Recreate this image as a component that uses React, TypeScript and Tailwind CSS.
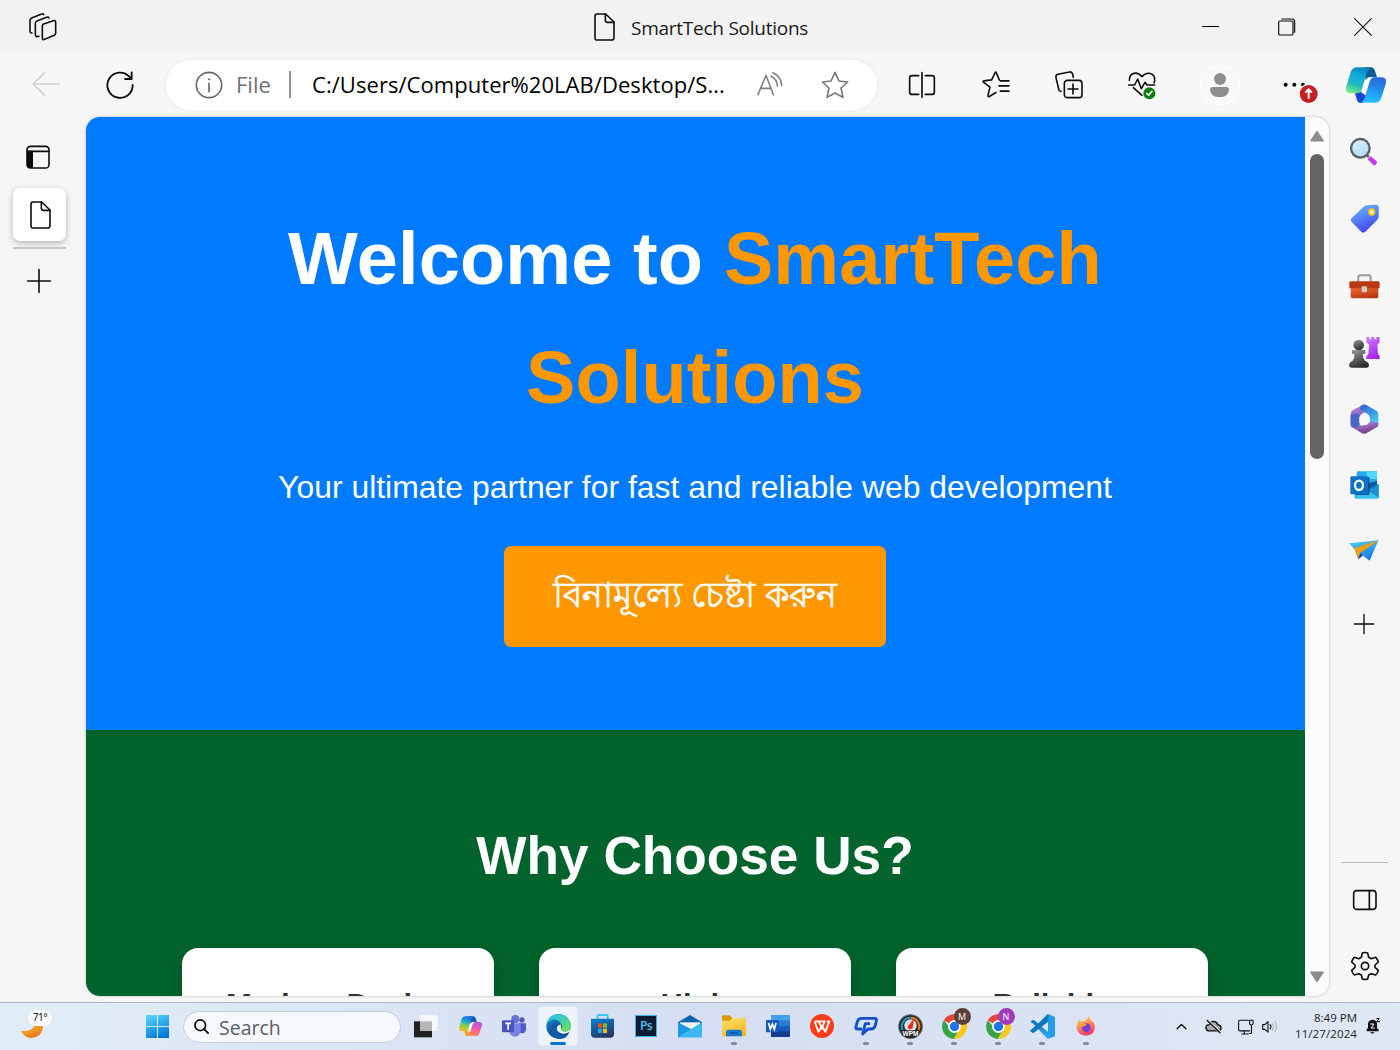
import React from "react";

type IcProps = { vb: string; w: number; h: number; children: React.ReactNode; c?: string };

function Ic({ vb, w, h, children, c = "#0d0d0d" }: IcProps) {
  return (
    <svg className="block shrink-0 overflow-visible" width={w} height={h} viewBox={vb} fill="none" stroke={c} strokeWidth={4.8} strokeLinecap="round" strokeLinejoin="round">
      {children}
    </svg>
  );
}

function Cell({ className, children }: { className: string; children?: React.ReactNode }) {
  return <div className={"flex shrink-0 items-center justify-center " + className}>{children}</div>;
}

const PageIcon = ({ w = 21, h = 28 }: { w?: number; h?: number }) => (
  <Ic vb="0 0 63 84" w={w} h={h}>
    <path d="M9 3H35L60 27V74Q60 81 53 81H9Q3 81 3 74V10Q3 3 9 3Z" />
    <path d="M34 3V22Q34 28 40 28H60" />
  </Ic>
);

function TitleBar() {
  return (
    <header className="flex h-[53px] shrink-0 items-center bg-[#f2f2f2]">
      <Cell className="w-[86px]">
        <Ic vb="0 0 84 84" w={28} h={28} c="#111">
          <path d="M42 34L73 23Q80 21 80 28V60Q80 65 76 67L47 79Q40 82 40 75V40Q40 36 42 34Z" />
          <path d="M30 70H28Q20 74 19 65V31Q19 26 24 24L53 13Q58 11 60 15" />
          <path d="M9 60Q3 60 3 54V22Q3 17 8 15L36 4Q42 1 44 5" />
        </Ic>
      </Cell>
      <div className="ml-[508px] flex w-[578px] shrink-0 items-center">
        <PageIcon w={21} h={28} />
        <span className="mt-[2px] ml-[16px] font-['Open_Sans'] text-[19px] leading-6 tracking-[-0.25px] whitespace-nowrap text-[#1a1a1a]">SmartTech Solutions</span>
      </div>
      <Cell className="w-[77px]"><div className="h-px w-[17px] bg-black" /></Cell>
      <Cell className="w-[76px]">
        <Ic vb="0 0 54 54" w={18} h={18}>
          <g strokeWidth="3.5"><rect x="2" y="9" width="43" height="42" rx="4" /><path d="M11 3H42Q50 3 50 12V43" /></g>
        </Ic>
      </Cell>
      <Cell className="w-[76px]">
        <Ic vb="0 0 54 54" w={18} h={18}><path strokeWidth="3.2" d="M2 2L52 52M52 2L2 52" /></Ic>
      </Cell>
    </header>
  );
}

function Copilot({ size, multi = false }: { size: number; multi?: boolean }) {
  const p = multi ? "m" : "b";
  const a = multi ? ["#1767df", "#1aa7d5", "#8bcf45", "#f5b928"] : ["#0886c4", "#12a9dc", "#1fb9be", "#73ea89"];
  const b = multi ? ["#b052e9", "#df5ac0", "#ff6981", "#ff9551"] : ["#2a68d6", "#2383ea", "#1fa4f6", "#2fc0fb"];
  return (
    <svg width={size} height={size * 0.9} viewBox="0 0 120 108" className="block">
      <defs>
        <linearGradient id={p + "1"} x1=".6" y1="0" x2=".3" y2="1">{a.map((c, i) => <stop key={i} offset={i / 3} stopColor={c} />)}</linearGradient>
        <linearGradient id={p + "2"} x1=".6" y1="0" x2=".4" y2="1">{b.map((c, i) => <stop key={i} offset={i / 3} stopColor={c} />)}</linearGradient>
      </defs>
      <path d="M58 1H74Q84 2 87 12L93 31H78Q70 31 66 40L58 40Z" fill={multi ? "#1758bd" : "#0e5a98"} />
      <path d="M26 76H38Q50 76 54 64L64 64L58 98Q54 108 44 108Q35 108 32 96Z" fill={multi ? "#f6a02d" : "#1646d2"} />
      <path d="M69 31H84Q75 32 71 43L58 86Q54 79 46 78L57 44Q60 33 69 31Z" fill="#fff" />
      <path d="M34 1H76Q66 6 61 22L48 66Q44 79 32 79H14Q-3 79 1 58L14 16Q19 1 34 1Z" fill={`url(#${p}1)`} />
      <path d="M87 107H44Q54 102 58 88L71 43Q75 31 88 31H106Q124 31 119 51L106 92Q101 107 87 107Z" fill={`url(#${p}2)`} />
    </svg>
  );
}

function Toolbar() {
  return (
    <div className="flex h-[64px] shrink-0 items-center bg-[#f7f7f7]">
      <Cell className="w-[92px] pb-[2px]">
        <Ic vb="0 0 84 72" w={28} h={24} c="#d0d0d0"><path strokeWidth="4.800" d="M82 36H4M38 2L3 36L38 70" /></Ic>
      </Cell>
      <Cell className="w-[55px] pb-px">
        <Ic vb="0 0 84 84" w={28} h={28}><path strokeWidth="5.500" d="M80 42A38 38 0 1 1 70 17L77 24M77 4V24H57" /></Ic>
      </Cell>
      <div className="ml-[19px] flex h-[50px] w-[711px] shrink-0 items-center rounded-full bg-white pb-[1px] shadow-[0_0_5px_rgba(0,0,0,0.07)]">
        <Cell className="ml-[29px] w-[28px]">
          <Ic vb="0 0 84 84" w={28} h={28} c="#666"><circle cx="42" cy="42" r="38" /><path d="M42 37V62" /><circle cx="42" cy="25" r="2" fill="#666" strokeWidth="3" /></Ic>
        </Cell>
        <span className="mb-[2px] ml-[13px] w-[40px] font-['Open_Sans'] text-[22px] leading-7 whitespace-nowrap text-[#707070]">File</span>
        <div className="ml-[13px] h-[27px] w-[2px] bg-[#949494]" />
        <span className="mb-px ml-[21px] w-[430px] font-['Open_Sans'] text-[22px] leading-7 tracking-[0.05px] whitespace-nowrap text-black">C:/Users/Computer%20LAB/Desktop/S...</span>
        <Cell className="mb-[2px] ml-[15px] w-[26px]">
          <Ic vb="0 0 78 72" w={26} h={24} c="#808080"><path d="M3 68L27 10L49 68M11 49H42M48 2Q72 12 74 40M42 13Q60 21 61 42" /></Ic>
        </Cell>
        <Cell className="ml-[38px] w-[28px]">
          <Ic vb="0 0 84 84" w={28} h={28} c="#777"><path d="M42 4L54 30L80 33L60 51L66 79L42 66L18 79L24 51L4 33L30 30Z" /></Ic>
        </Cell>
      </div>
      <Cell className="w-[90px] pb-[1px]">
        <Ic vb="0 0 80 80" w={26} h={26}><path strokeWidth="5" d="M40 2V78M30 11H9Q2 11 2 18V62Q2 69 9 69H30M50 11H71Q78 11 78 18V62Q78 69 71 69H50" /></Ic>
      </Cell>
      <Cell className="w-[58px] pb-[2px]">
        <Ic vb="0 0 84 80" w={28} h={27}><path d="M42 64L22 76Q17 78 18 72L24 48L4 33Q2 29 6 29L29 26L39 5Q41 1 43 5L52 26M55 29H81M51 44H81M55 60H81" /></Ic>
      </Cell>
      <Cell className="w-[88px] pb-[1px]">
        <Ic vb="0 0 84 84" w={28} h={28}><rect x="28" y="28" width="53" height="52" rx="9" /><path d="M54 39V69M39 54H69M18 61Q12 61 11 54L3 20Q1 12 9 10L43 3Q50 1 53 9L55 19" /></Ic>
      </Cell>
      <Cell className="w-[58px] pb-[1px]">
        <Ic vb="0 0 84 84" w={28} h={28}>
          <path d="M4 28C4 4 28 0 42 17C56 0 81 5 80 28Q80 33 78 35M2 42H20L29 24L40 53L51 34L57 42H80M16 50L42 73" />
          <circle cx="64" cy="67" r="18" fill="#107c10" stroke="none" /><path stroke="#fff" d="M56 67L62 73L72 61" />
        </Ic>
      </Cell>
      <Cell className="w-[97px]">
        <div className="flex h-[38px] w-[38px] flex-col items-center rounded-full bg-[#f8f8f8] pt-[7px] ring-1 ring-white">
          <div className="h-[12px] w-[12px] rounded-full bg-[#8e8e8e]" /><div className="mt-[2px] h-[10px] w-[19px] rounded-t-[3px] rounded-b-[9px] bg-[#8e8e8e]" />
        </div>
      </Cell>
      <Cell className="w-[64px] pb-px">
        <svg className="overflow-visible" width="36" height="28" viewBox="0 0 108 84">
          <g fill="#0d0d0d"><circle cx="11" cy="41" r="6" /><circle cx="37" cy="41" r="6" /><circle cx="63" cy="41" r="6" /></g>
          <circle cx="80" cy="69" r="31" fill="#f7f7f7" />
          <circle cx="80" cy="69" r="27" fill="#c42021" />
          <path d="M80 83V56M70 65L80 55L90 65" fill="none" stroke="#fff" strokeWidth="6" />
        </svg>
      </Cell>
      <Cell className="w-[68px]"><Copilot size={40} /></Cell>
    </div>
  );
}

function LeftBar() {
  return (
    <aside className="flex w-[86px] shrink-0 flex-col">
      <div className="mt-[28px] ml-[26px]">
        <Ic vb="0 0 72 72" w={24} h={24}><rect x="3" y="4" width="66" height="65" rx="10" /><path d="M3 17H21V69H10Q3 69 3 61Z" fill="#0d0d0d" stroke="none" /><path d="M4 19H69" /></Ic>
      </div>
      <div className="mt-[19px] ml-[13px] flex h-[53px] w-[53px] items-center justify-center rounded-[7px] bg-white pl-[2px] shadow-[0_2px_6px_rgba(0,0,0,0.28)]"><PageIcon /></div>
      <div className="mt-[6px] ml-[13px] h-[2px] w-[53px] bg-[#c6c6c6]" />
      <div className="mt-[20px] ml-[27px]"><Ic vb="0 0 72 72" w={24} h={24}><path d="M36 2V70M2 36H70" /></Ic></div>
    </aside>
  );
}

function FeatureCard({ title }: { title: string }) {
  return (
    <article className="h-[300px] w-[312px] shrink-0 rounded-[16px] bg-white pt-[33px] text-center shadow-[0_6px_16px_rgba(0,0,0,0.22)]">
      <h3 className="text-[31px] leading-[50px] font-bold text-[#333]">{title}</h3>
    </article>
  );
}

function WebPage() {
  return (
    <main className="flex h-[879px] w-[1243px] shrink-0 overflow-hidden rounded-[14px] bg-[#fcfcfc] shadow-[0_0_3px_rgba(0,0,0,0.25)]">
      <div className="w-[1219px] shrink-0 overflow-hidden font-['Liberation_Sans']">
        <section className="flex h-[613px] flex-col items-center bg-[#007bff] pt-[83px] pr-[1px] text-center text-white">
          <h1 className="w-[900px] text-[74px] leading-[118.5px] font-bold tracking-[0.12px]">Welcome to <span className="text-[#ff9800]">SmartTech Solutions</span></h1>
          <p className="mt-[24px] text-[31.9px] leading-[52px] whitespace-nowrap">Your ultimate partner for fast and reliable web development</p>
          <button className="mt-[33px] h-[101px] w-[382px] rounded-[7px] bg-[#ff9800] pb-[3px] text-[35px] whitespace-nowrap [-webkit-text-stroke:0.6px_white]">বিনামূল্যে চেষ্টা করুন</button>
        </section>
        <section className="flex h-[300px] flex-col items-center bg-[#02632c] pt-[83px] pr-[1px] text-white">
          <h2 className="text-[53.2px] leading-[86px] font-bold">Why Choose Us?</h2>
          <div className="mt-[49px] flex gap-[45px]"><FeatureCard title="Modern Design" /><FeatureCard title="High" /><FeatureCard title="Reliable" /></div>
        </section>
      </div>
      <div className="flex flex-1 flex-col items-center pt-[13px]">
        <svg width="16" height="12" viewBox="0 0 16 12"><path d="M8 1L14.5 11H1.5Z" fill="#8b8b8b" stroke="#8b8b8b" strokeLinejoin="round" /></svg>
        <div className="mt-[12px] h-[305px] w-[14px] rounded-full bg-[#636363]" />
        <svg className="mt-[512px]" width="16" height="12" viewBox="0 0 16 12"><path d="M8 11L14.5 1H1.5Z" fill="#8b8b8b" stroke="#8b8b8b" strokeLinejoin="round" /></svg>
      </div>
    </main>
  );
}

function Gradients() {
  const g: [string, string, string][] = [
    ["tag", "#65b8ff", "#423bea"], ["box", "#f36b32", "#b63512"], ["pawn", "#929292", "#252525"], ["rook", "#cb76f8", "#a41cf5"],
    ["glass", "#d9f2ff", "#a9dafb"], ["hexa", "#3469cf", "#43d0f4"], ["hexb", "#b284e6", "#6b367c"], ["plane", "#4ccbed", "#176de8"],
    ["moon", "#f6c33c", "#ec751d"], ["edge", "#29bdf1", "#6de34c"], ["edgeb", "#1389d0", "#083c80"], ["folder", "#ffdd68", "#f7b61f"],
    ["win", "#51d1ff", "#0074d3"], ["fox", "#ffd43d", "#f52c70"], ["store", "#087dcb", "#263260"], ["code", "#006cae", "#36acf5"],
  ];
  return <svg className="absolute h-0 w-0"><defs>{g.map(([id, a, b]) => <linearGradient key={id} id={id} x1=".3" y1="0" x2=".7" y2="1"><stop stopColor={a} /><stop offset="1" stopColor={b} /></linearGradient>)}</defs></svg>;
}

function Art({ w, h, vb, children }: { w: number; h: number; vb: string; children: React.ReactNode }) {
  return <svg className="block shrink-0" width={w} height={h} viewBox={vb}>{children}</svg>;
}

function RightBar() {
  return (
    <aside className="flex w-[70px] shrink-0 flex-col items-center">
      <Cell className="mt-[5px] h-[60px]">
        <Art w={30} h={30} vb="0 0 90 90"><path d="M56 67L65 58L83 73Q86 78 81 82Q77 87 73 84Z" fill="#c53cf0" /><path d="M48 50L60 60" stroke="#666" strokeWidth="8" /><circle cx="34" cy="34" r="28" fill="url(#glass)" stroke="#5b5f60" strokeWidth="7" /></Art>
      </Cell>
      <Cell className="h-[74px] pl-[2px]"><Art w={30} h={30} vb="0 0 90 90"><path d="M48 4L78 2Q86 2 86 10V38Q86 43 82 47L46 83Q40 88 34 83L5 54Q0 48 5 42L40 9Q44 4 48 4Z" fill="url(#tag)" /><circle cx="65" cy="24" r="8" fill="#fff" stroke="#f8c614" strokeWidth="6" /></Art></Cell>
      <Cell className="h-[62px] pb-px"><Art w={31} h={25} vb="0 0 93 75"><path d="M28 22V10Q28 4 35 4H59Q65 4 65 10V22" fill="none" stroke="#999" strokeWidth="6" /><path d="M5 36H88V68Q88 73 82 73H11Q5 73 5 68Z" fill="url(#box)" /><path d="M1 26Q1 22 6 22H88Q92 22 92 27V43H1Z" fill="#b93912" /><rect x="38" y="37" width="16" height="18" rx="3" fill="#c9cbd0" /></Art></Cell>
      <Cell className="h-[68px]"><Art w={31} h={32} vb="0 0 93 96">
        <path d="M52 3H61V10H67V3H76V10H82V3H92V19L85 26L87 54L92 60V69H52V60L58 54L60 26L52 19Z" fill="url(#rook)" />
        <g fill="url(#pawn)"><circle cx="29" cy="27" r="16" /><path d="M9 42H49V54H42Q41 67 49 75Q60 79 60 88Q60 95 52 95H7Q0 95 0 88Q0 79 10 75Q18 65 16 54H9Z" /></g>
      </Art></Cell>
      <Cell className="h-[66px]"><Art w={29} h={31} vb="0 0 87 93">
        <path d="M38 2L8 19Q2 23 2 30V62Q2 67 7 70L20 76Q28 70 28 60V42Q28 34 35 30L60 15L50 4Q44 0 38 2Z" fill="url(#hexb)" />
        <path d="M36 3Q43 0 50 4L79 20Q85 24 85 31V58Q78 64 68 59L58 53V39Q58 33 53 30L38 22Q22 14 36 3Z" fill="url(#hexa)" />
        <path d="M2 34V62Q2 67 7 70L28 80Q32 70 28 58V42Q28 37 30 33Q16 22 2 34Z" fill="#4a67c8" />
        <path d="M7 70Q16 74 26 67L30 64Q36 66 44 62L60 52L85 57V62Q85 67 80 70L50 87Q43 91 36 88Z" fill="url(#hexb)" />
        <path d="M37 31H50L60 40V53L50 63H37L28 53V40Z" fill="#f6f6f6" />
      </Art></Cell>
      <Cell className="h-[66px] pl-px"><Art w={29} h={28} vb="0 0 87 84"><rect x="20" y="1" width="61" height="46" rx="4" fill="#28a8ea" /><rect x="50" y="2" width="31" height="22" fill="#50d9ff" /><path d="M13 44L86 40V80Q86 83 82 83H18Q13 83 13 78Z" fill="#35c3f0" /><path d="M86 39V80L52 57Z" fill="#148fdb" /><path d="M81 42L56 56V36L81 30Z" fill="#0d5ba0" /><rect x="15" y="18" width="43" height="54" rx="4" fill="#064a83" /><rect x="1" y="16" width="53" height="54" rx="4" fill="#0c72c8" /><ellipse cx="27" cy="43" rx="12" ry="14" fill="none" stroke="#fff" strokeWidth="7" /></Art></Cell>
      <Cell className="h-[66px]"><Art w={30} h={22} vb="0 0 90 66"><path d="M1 10L88 1L62 62L40 45L28 56L18 30Z" fill="url(#plane)" /><path d="M88 1L16 25L27 58L34 38Z" fill="#f5a00b" /><path d="M34 38L27 58L42 47Z" fill="#174aa7" /></Art></Cell>
      <Cell className="mt-[30px] h-[20px]"><Ic vb="0 0 60 60" w={20} h={20}><path strokeWidth="4" d="M30 1V59M1 30H59" /></Ic></Cell>
      <div className="mt-[228px] h-px w-[47px] bg-[#bcbcbc]" />
      <Cell className="mt-[26px] h-[22px] pl-px"><Ic vb="0 0 72 66" w={24} h={22}><rect x="2" y="5" width="67" height="56" rx="9" /><path d="M49 5V61" /></Ic></Cell>
      <Cell className="mt-[40px] h-[30px] pl-px"><Ic vb="0 0 84 90" w={28} h={30}>
        <circle cx="42" cy="45" r="11" /><path d="M34 6Q42 3 50 6L53 19L61 23L74 19Q80 25 82 33L72 42V49L82 58Q80 66 74 72L61 68L53 72L50 84Q42 87 34 84L31 72L23 68L10 72Q4 66 2 58L12 49V42L2 33Q4 25 10 19L23 23L31 19Z" />
      </Ic></Cell>
    </aside>
  );
}

function Chrome({ letter, color }: { letter: string; color: string }) {
  return (
    <div className="relative">
      <Art w={25} h={25} vb="0 0 72 72"><circle cx="36" cy="36" r="36" fill="#e7e7e7" /><path d="M36 36L5 18A36 36 0 0 1 67 18H36Z" fill="#e7443b" /><path d="M5 18A36 36 0 0 0 34 72L50 45L36 36H20Z" fill="#34a447" /><path d="M67 18H36L51 45L34 72A36 36 0 0 0 67 18Z" fill="#fcc71c" /><circle cx="36" cy="36" r="16" fill="#1f74e9" stroke="#fff" strokeWidth="5" /></Art>
      <span className={"absolute -top-[6px] left-[12px] flex h-[17px] w-[17px] items-center justify-center rounded-full font-['Open_Sans'] text-[9px] leading-none text-white " + color}>{letter}</span>
    </div>
  );
}

function TaskItem({ children, running = false, active = false }: { children: React.ReactNode; running?: boolean; active?: boolean }) {
  return (
    <div className="flex h-[47px] w-[44px] shrink-0 flex-col items-center pt-[4px]">
      <div className={active ? "flex h-[38px] w-[38px] flex-col items-center justify-center rounded-[4px] bg-[#edf2fb] ring-1 ring-[#e2e8f5]" : "flex h-[38px] w-[38px] items-center justify-center"}>
        {children}
      </div>
      {running && <div className="-mt-[3px] h-[3px] w-[6px] rounded-full bg-[#85899a]" />}
      {active && <div className="-mt-[3px] h-[3px] w-[16px] rounded-full bg-[#0875d1]" />}
    </div>
  );
}

function Taskbar() {
  return (
    <footer className="flex h-[48px] shrink-0 items-center border-t border-[#aeb5c4] bg-linear-to-r from-[#e1edf6] via-[#d6def3] to-[#dfe9f4]">
      <div className="relative ml-[21px] h-[38px] w-[34px]">
        <svg className="block" width="23" height="34" viewBox="0 0 69 102"><path d="M44 34Q66 38 66 58Q62 88 32 90Q10 90 0 68Q26 72 38 58Q44 48 44 34Z" fill="url(#moon)" /></svg>
        <div className="absolute top-[2px] left-[7px] flex h-[16px] w-[24px] items-center justify-center rounded-full bg-[#f7f9fc] font-['Open_Sans'] text-[10px] tracking-[-0.4px] text-black">71°</div>
      </div>
      <div className="ml-[91px] w-[23px]"><Art w={23} h={23} vb="0 0 69 69"><path d="M0 0H33V33H0ZM36 0H69V33H36ZM0 36H33V69H0ZM36 36H69V69H36Z" fill="url(#win)" /></Art></div>
      <div className="ml-[14px] flex h-[32px] w-[218px] shrink-0 items-center rounded-full border border-[#c3cce0] bg-[#f5f8fd] pl-[10px]">
        <Ic vb="0 0 48 48" w={15} h={15}><circle cx="20" cy="20" r="17" strokeWidth="5.500" /><path strokeWidth="6" d="M32 32L45 45" /></Ic>
        <span className="mt-[2px] ml-[10px] font-['Open_Sans'] text-[19.5px] leading-7 text-[#5c5e64]">Search</span>
      </div>
      <div className="ml-[3px] flex">
        <TaskItem><Art w={24} h={23} vb="0 0 72 69"><rect y="19" width="54" height="48" fill="#222" /><rect x="18" width="53" height="47" fill="#f7f7f7" /><rect x="18" y="19" width="36" height="28" fill="#b5b5b5" /></Art></TaskItem>
        <TaskItem><Copilot size={23} multi /></TaskItem>
        <TaskItem><Art w={24} h={22} vb="0 0 72 66"><circle cx="40" cy="12" r="12" fill="#6770d7" /><circle cx="60" cy="15" r="8" fill="#5059c9" /><path d="M48 25H72V45Q68 57 56 54L46 48Z" fill="#5059c9" /><path d="M20 25H56V45Q54 66 37 65Q25 63 22 51Z" fill="#7b83eb" /><rect y="16" width="36" height="36" rx="4" fill="#4b53bc" /><path d="M10 25H27M18.500 25V44" stroke="#fff" strokeWidth="5" /></Art></TaskItem>
        <TaskItem active><Art w={25} h={25} vb="0 0 72 72"><circle cx="36" cy="36" r="35" fill="url(#edgeb)" /><path d="M1 29Q8 1 37 0Q64 0 72 30Q73 50 54 51Q42 52 43 42Q49 25 32 17Q15 12 1 29Z" fill="url(#edge)" /><path d="M43 38Q31 27 28 45Q32 62 51 61Q60 61 67 54Q56 76 33 71Q8 64 12 39Q17 22 36 27Q50 31 45 41Z" fill="#0e5ba6" /><path d="M43 31Q31 30 31 44Q33 54 48 57Q59 58 68 51L72 42Q65 51 53 51Q41 49 43 41Z" fill="#edf2fb" /></Art></TaskItem>
        <TaskItem><Art w={23} h={24} vb="0 0 69 72"><path d="M20 16V6Q20 3 24 3H46Q50 3 50 6V16" stroke="#35c6f5" strokeWidth="6" fill="none" /><path d="M0 14H69V60Q69 71 58 71H11Q0 71 0 60Z" fill="url(#store)" /><path d="M21 28H33V41H21Z" fill="#ee502b" /><path d="M36 28H48V41H36Z" fill="#80ba22" /><path d="M21 44H33V57H21Z" fill="#21a5ee" /><path d="M36 44H48V57H36Z" fill="#ffba14" /></Art></TaskItem>
        <TaskItem><div className="flex h-[22px] w-[22px] items-center justify-center border border-[#39b9eb] bg-[#111b31] font-['Open_Sans'] text-[12px] font-semibold tracking-[-0.5px] text-[#48c8f5]">Ps</div></TaskItem>
        <TaskItem><Art w={24} h={23} vb="0 0 72 69"><path d="M0 22L36 0L72 22V32H0Z" fill="#0b64ae" /><path d="M6 22H66V48H6Z" fill="#f4f4f4" /><path d="M0 22L50 48L72 67H0Z" fill="#199be3" /><path d="M72 22L0 67H72Z" fill="#3db8ee" /></Art></TaskItem>
        <TaskItem running><Art w={24} h={22} vb="0 0 72 66"><path d="M0 4Q0 1 5 1H22L31 9H67Q72 9 72 14V30H0Z" fill="#dc990b" /><path d="M0 17H23L31 9H72V60Q72 64 67 64H5Q0 64 0 60Z" fill="url(#folder)" /><path d="M12 64V52Q12 44 20 44H52Q60 44 60 52V64Z" fill="#1678cf" /><path d="M24 54H48" stroke="#0b508f" strokeWidth="4" /></Art></TaskItem>
        <TaskItem><Art w={24} h={22} vb="0 0 72 66"><rect x="15" width="57" height="66" rx="4" fill="#185abd" /><path d="M15 4Q15 0 19 0H68Q72 0 72 4V17H15Z" fill="#41a5ee" /><path d="M15 17H72V33H15Z" fill="#2b7cd3" /><path d="M15 49H72V62Q72 66 68 66H15Z" fill="#103f91" /><rect y="15" width="38" height="37" rx="3" fill="#185abd" /><path d="M8 24L13 43L19 27L25 43L30 24" fill="none" stroke="#fff" strokeWidth="5" /></Art></TaskItem>
        <TaskItem><Art w={24} h={24} vb="0 0 72 72"><circle cx="36" cy="36" r="36" fill="#fb3e18" /><path d="M14 22H44L37 38M14 22L25 53L36 36L46 53L58 22H50M26 22L38 46" fill="none" stroke="#fff" strokeWidth="5.500" strokeLinejoin="round" /></Art></TaskItem>
        <TaskItem running><Art w={24} h={22} vb="0 0 72 66"><path d="M24 42H9Q4 42 6 34L10 20Q13 10 24 10H62Q69 10 67 18L64 31Q61 42 50 42H42L26 57L34 26H48" fill="none" stroke="#104fc4" strokeWidth="8.500" strokeLinejoin="round" /></Art></TaskItem>
        <TaskItem running><Art w={25} h={25} vb="0 0 72 72"><circle cx="36" cy="36" r="34" fill="#272727" stroke="#666" strokeWidth="3" /><path d="M13 46A25 25 0 0 1 36 11" stroke="#1899d8" strokeWidth="6" fill="none" /><path d="M37 11A25 25 0 0 1 59 46" stroke="#f07927" strokeWidth="6" fill="none" /><circle cx="36" cy="33" r="18" fill="#ddd" /><path d="M46 12L42 41L31 45L28 37Z" fill="#ee2721" /><path d="M12 47H60V62Q36 78 12 62Z" fill="#272727" /><text x="36" y="64" textAnchor="middle" fill="#fff" fontFamily="Liberation Sans" fontWeight="700" fontSize="20" textLength="46" lengthAdjust="spacingAndGlyphs">WPM</text></Art></TaskItem>
        <TaskItem running><Chrome letter="M" color="bg-[#5b4037]" /></TaskItem>
        <TaskItem running><Chrome letter="N" color="bg-[#a23bba]" /></TaskItem>
        <TaskItem running><Art w={25} h={25} vb="0 0 72 72"><path d="M50 1L72 9V63L50 71L9 27L1 23L7 17L13 19L52 52V20L13 52L7 55L1 49L9 43Z" fill="url(#code)" /><path d="M0 48L52 2V22L10 55Z" fill="#0a79be" /><path d="M53 0L72 9V63L53 71Z" fill="#249ceb" /></Art></TaskItem>
        <TaskItem running><Art w={20} h={20} vb="0 0 60 60"><path d="M37 1Q43 6 44 13Q59 21 56 39Q52 58 30 59Q6 58 2 37Q1 18 12 10L14 17L25 15Q34 13 37 1Z" fill="url(#fox)" /><circle cx="31" cy="35" r="13" fill="#713fd5" /><path d="M12 29Q20 19 33 25L26 31Q21 34 16 29Z" fill="#ff9b24" /></Art></TaskItem>
      </div>
      <div className="ml-[68px] flex items-center">
        <Ic vb="0 0 36 24" w={11} h={7}><path d="M3 20L18 5L33 20" /></Ic>
        <div className="ml-[18px]"><Ic vb="0 0 54 48" w={17} h={15}><path strokeWidth="4.500" fill="#aaa" d="M14 38Q3 38 3 27Q3 18 14 18Q18 7 28 8Q39 9 41 19Q51 19 51 29Q51 38 40 38Z" /><path stroke="#e4ebf4" strokeWidth="8" d="M9 5L50 44" /><path strokeWidth="4.500" d="M7 5L48 44" /></Ic></div>
        <div className="ml-[16px]"><Ic vb="0 0 51 51" w={16} h={16}><path strokeWidth="3.500" d="M33 4H6Q2 4 2 8V34Q2 38 6 38H37M20 38V47M12 48H32M37 4H48V16Q43 22 37 16ZM43 20V42Q43 47 36 46" /></Ic></div>
        <div className="ml-[8px]"><Ic vb="0 0 51 45" w={16} h={14}><path strokeWidth="3.500" d="M2 15H9L19 5V39L9 30H2ZM26 15Q31 22 26 29" /><path strokeWidth="3" stroke="#aaa" d="M33 10Q41 22 33 34M41 5Q52 22 41 39" /></Ic></div>
        <div className="mb-[2px] ml-[14px] w-[65px] text-right font-['Open_Sans'] text-[11.5px] leading-[16px] whitespace-nowrap text-[#1d1d20]"><div>8:49 PM</div><div className="-ml-2 tracking-[0.1px]">11/27/2024</div></div>
        <div className="ml-[9px]"><Ic vb="0 0 45 51" w={15} h={17}><path fill="#111" stroke="none" d="M2 40V34L6 30V18Q7 6 19 5Q30 4 33 16V30L38 35V40ZM12 43H26Q19 51 12 43Z" /><path stroke="#fff" strokeWidth="3" d="M14 18H24L15 30H25" /><path strokeWidth="3" d="M32 2H40L32 11H41" /></Ic></div>
      </div>
    </footer>
  );
}

export default function App() {
  return (
    <div className="flex h-[1050px] w-[1400px] flex-col overflow-hidden bg-[#f6f6f6]">
      <Gradients />
      <TitleBar />
      <Toolbar />
      <div className="flex h-[885px] shrink-0"><LeftBar /><WebPage /><RightBar /></div>
      <Taskbar />
    </div>
  );
}
